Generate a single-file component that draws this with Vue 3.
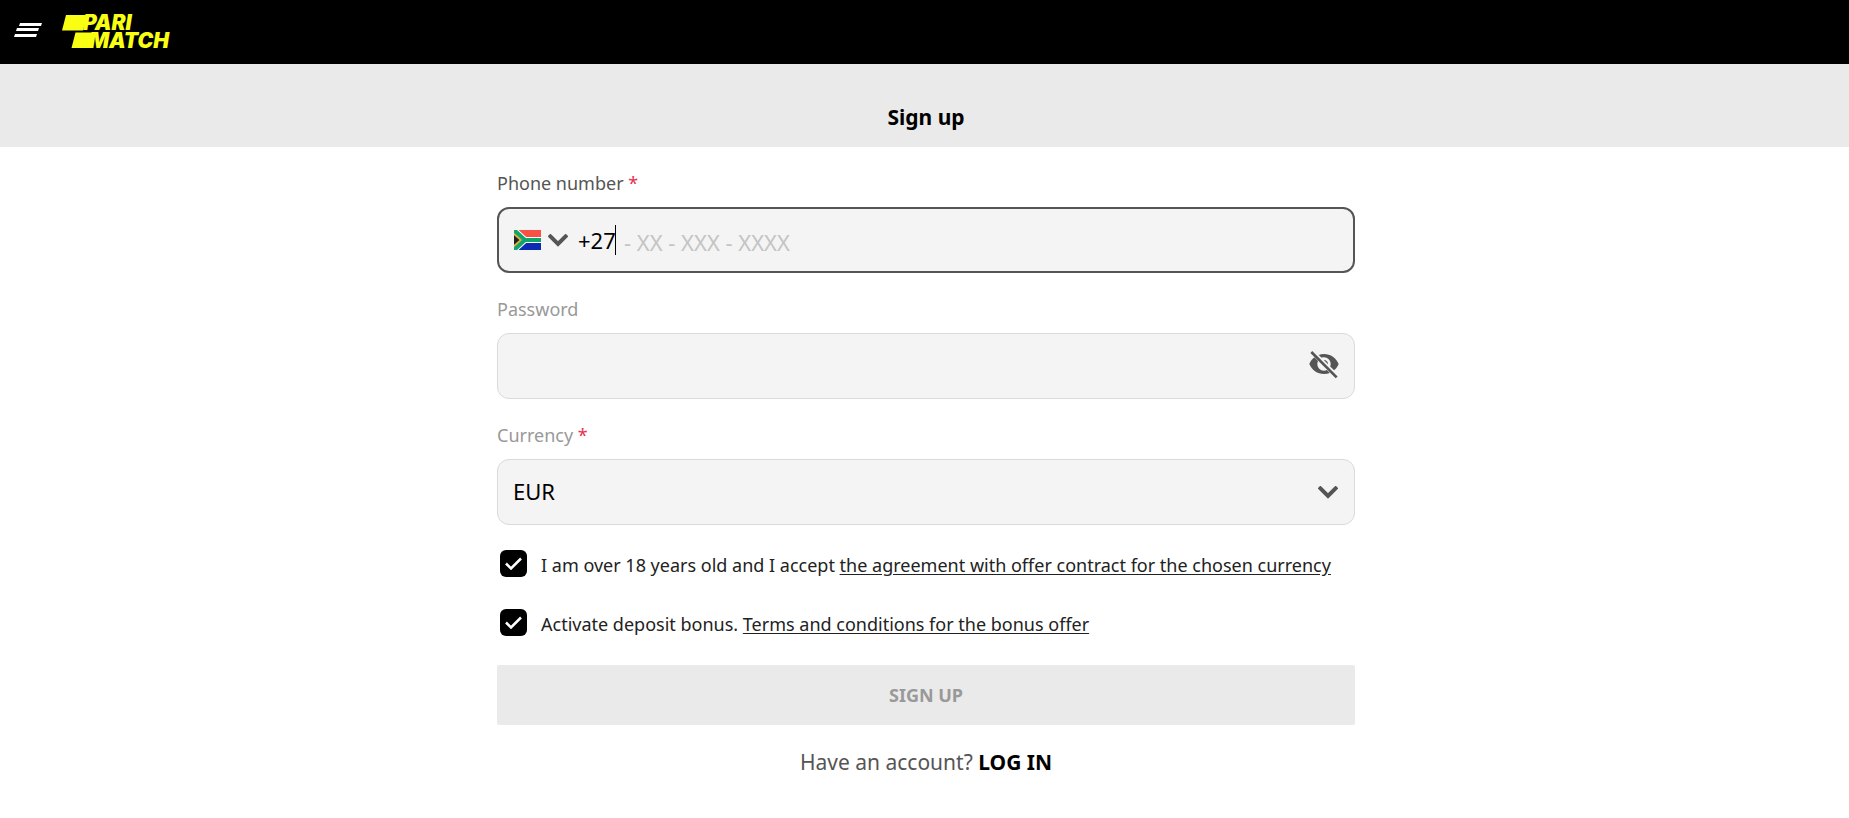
<template>
  <div class="page">
    <header class="topbar">
      <button type="button" class="menu-button" aria-label="Menu">
        <svg class="menu-icon" width="28" height="14" viewBox="0 0 28 14" fill="#fff">
          <path d="M6 0h22l-1 3H5zM3 5h22l-1 3H2zM1 11h22l-1 3H0z" />
        </svg>
      </button>
      <a href="#" class="logo" aria-label="Parimatch">
        <svg width="109" height="34" viewBox="0 0 109 34" fill="#f8ff13">
          <path d="M4 0H25L21 15.500H0zM13.500 17.500H32L28 33H9.500z" />
          <text x="21" y="15" class="logo-text">PARI</text>
          <text x="27" y="33" class="logo-text">MATCH</text>
        </svg>
      </a>
    </header>

    <div class="title-bar">
      <h1 class="title">Sign up</h1>
    </div>

    <main class="content">
      <form class="form" @submit.prevent>
        <div class="field">
          <label for="phone" class="label active">Phone number <span class="required">*</span></label>
          <div class="control focused">
            <button type="button" class="country-button" aria-label="Country">
              <svg width="27" height="20" viewBox="0 0 27 20">
                <path fill="#fa5045" d="M0 0h27v10H0z" />
                <path fill="#0b2bb0" d="M0 10h27v10H0z" />
                <path stroke="#fff" stroke-width="6" fill="none" d="M-1-1L11 10L-1 21M11 10H27" />
                <path fill="#222" d="M0 3l8 7-8 7z" />
                <path stroke="#e8b13a" stroke-width="2" fill="none" d="M-1 3L7 10L-1 17" />
                <path stroke="#10a56b" stroke-width="4" fill="none" d="M-1-1L11 10L-1 21M11 10H27" />
              </svg>
              <svg width="20" height="13" viewBox="0 0 20 13">
                <path class="chevron" d="M1 1L10 10L19 1" />
              </svg>
            </button>
            <input id="phone" v-model="phone" type="tel" class="phone-input" />
            <span class="caret"></span>
            <span class="mask">- XX - XXX - XXXX</span>
          </div>
        </div>

        <div class="field">
          <label for="password" class="label">Password</label>
          <div class="control">
            <input id="password" v-model="password" :type="showPassword ? 'text' : 'password'" class="text-input" />
            <button type="button" class="eye-button" aria-label="Show password" @click="showPassword = !showPassword">
              <svg width="32" height="32" viewBox="0 0 24 24" fill="#555">
                <path d="M12 7c2.760 0 5 2.240 5 5 0 .65-.13 1.260-.36 1.830l2.920 2.920c1.510-1.260 2.700-2.890 3.430-4.750-1.730-4.390-6-7.500-11-7.500-1.400 0-2.740.25-3.980.7l2.160 2.160C10.740 7.130 11.350 7 12 7zM4.740 7.010C3.080 8.300 1.780 10.020 1 12c1.730 4.390 6 7.500 11 7.500 1.550 0 3.030-.3 4.380-.84l-2.180-2.190c-.67.33-1.410.53-2.200.53-2.760 0-5-2.240-5-5 0-.79.2-1.530.53-2.200z" />
                <path d="M8.500 11C8 14 10 16 13 15.500" fill="none" stroke="#f4f4f4" stroke-width="1.500" />
                <path d="M11.840 9.020l3.150 3.150.02-.16c0-1.660-1.340-3-3-3z" />
                <path d="M2.500 3L21.500 22" fill="none" stroke="#555" stroke-width="2" />
              </svg>
            </button>
          </div>
        </div>

        <div class="field">
          <label for="currency" class="label">Currency <span class="required">*</span></label>
          <div class="control">
            <select id="currency" v-model="currency" class="select">
              <option>EUR</option>
              <option>USD</option>
              <option>ZAR</option>
            </select>
            <svg class="select-arrow" width="20" height="13" viewBox="0 0 20 13">
              <path class="chevron" d="M1 1L10 10L19 1" />
            </svg>
          </div>
        </div>

        <div class="checks">
          <div v-for="item in agreements" :key="item.id" class="check-row">
            <input :id="item.id" v-model="item.checked" type="checkbox" class="checkbox-input" />
            <label :for="item.id" class="checkbox">
              <svg v-if="item.checked" width="17" height="13" viewBox="0 0 17 13">
                <path d="M1 6.500L6 11.500L16 1.500" fill="none" stroke="#fff" stroke-width="2.500" />
              </svg>
            </label>
            <p class="check-text">
              <label :for="item.id">{{ item.text }}</label>
              {{ ' ' }}<a href="#">{{ item.link }}</a>
            </p>
          </div>
        </div>

        <button type="submit" class="submit" disabled>SIGN UP</button>
      </form>

      <p class="login">Have an account? <a href="#">LOG IN</a></p>
    </main>
  </div>
</template>

<script setup>
import { ref } from 'vue';

const phone = ref('+27');
const password = ref('');
const showPassword = ref(false);
const currency = ref('EUR');

const agreements = ref([
  {
    id: 'age',
    checked: true,
    text: 'I am over 18 years old and I accept',
    link: 'the agreement with offer contract for the chosen currency',
  },
  {
    id: 'bonus',
    checked: true,
    text: 'Activate deposit bonus.',
    link: 'Terms and conditions for the bonus offer',
  },
]);
</script>

<style>
body {
  margin: 0;
  background: #fff;
}
</style>

<style scoped>
.page,
.page button,
.page input,
.page select {
  font-family: 'Noto Sans', 'Open Sans', sans-serif;
}

.page * {
  box-sizing: border-box;
}

.topbar {
  display: flex;
  align-items: center;
  gap: 20px;
  height: 64px;
  padding: 0 14px;
  background: #000;
}

.menu-button,
.country-button,
.eye-button {
  display: flex;
  align-items: center;
  padding: 0;
  border: none;
  background: none;
  cursor: pointer;
}

.menu-button,
.eye-button {
  padding-bottom: 4px;
}

.logo {
  display: flex;
}

.logo svg {
  overflow: visible;
}

.logo-text {
  font-family: Inter, sans-serif;
  font-size: 21px;
  font-weight: 900;
  font-style: italic;
}

.title-bar {
  padding: 39px 14px 16px 17px;
  background: #eaeaea;
  text-align: center;
}

.title {
  margin: 0;
  font-size: 21px;
  line-height: 28px;
  font-weight: 700;
  color: #000;
}

.content {
  max-width: 861px;
  margin: 0 auto;
  padding: 24px 0 0 3px;
}

.field {
  margin-bottom: 24px;
}

.label {
  display: block;
  margin-bottom: 12px;
  font-size: 18px;
  line-height: 24px;
  color: #999;
}

.label.active {
  color: #555;
}

.required {
  color: #e8304f;
}

.control {
  position: relative;
  display: flex;
  align-items: center;
  height: 66px;
  padding: 0 14px 0 15px;
  border: 1px solid #dadada;
  border-radius: 12px;
  background: #f4f4f4;
  font-size: 22px;
}

.control.focused {
  border: 2px solid #555;
}

.country-button {
  gap: 7px;
  margin-right: 10px;
}

.chevron {
  fill: none;
  stroke: #555;
  stroke-width: 4;
}

.phone-input,
.text-input,
.select {
  height: 100%;
  padding: 0;
  border: none;
  outline: none;
  background: transparent;
  font-size: 22px;
  color: #000;
}

.phone-input {
  width: 37px;
}

.caret {
  width: 1px;
  height: 30px;
  background: #000;
}

.mask {
  padding: 3px 0 0 8px;
  color: #c4c4c4;
}

.text-input {
  flex: 1;
}

.select {
  flex: 1;
  padding-bottom: 2px;
  appearance: none;
}

.select-arrow {
  position: absolute;
  right: 16px;
  pointer-events: none;
}

.checks {
  display: flex;
  flex-direction: column;
  gap: 29px;
  padding: 1px 3px 0;
  margin-bottom: 26px;
}

.check-row {
  position: relative;
  display: flex;
  gap: 14px;
}

.checkbox-input {
  position: absolute;
  width: 27px;
  height: 27px;
  margin: 0;
  opacity: 0;
}

.checkbox {
  display: flex;
  flex: none;
  align-items: center;
  justify-content: center;
  width: 27px;
  height: 27px;
  border-radius: 6px;
  background: #000;
}

.check-text {
  margin: 0;
  font-size: 18px;
  line-height: 30px;
  color: #222;
}

.check-text a {
  color: inherit;
  text-underline-offset: 2px;
}

.submit {
  display: block;
  width: 100%;
  height: 60px;
  border: none;
  border-radius: 2px;
  background: #eaeaea;
  font-size: 18px;
  font-weight: 700;
  color: #999;
}

.login {
  margin: 22px 0 0;
  font-size: 21px;
  line-height: 30px;
  text-align: center;
  color: #555;
}

.login a {
  font-weight: 700;
  color: #000;
  text-decoration: none;
}
</style>
